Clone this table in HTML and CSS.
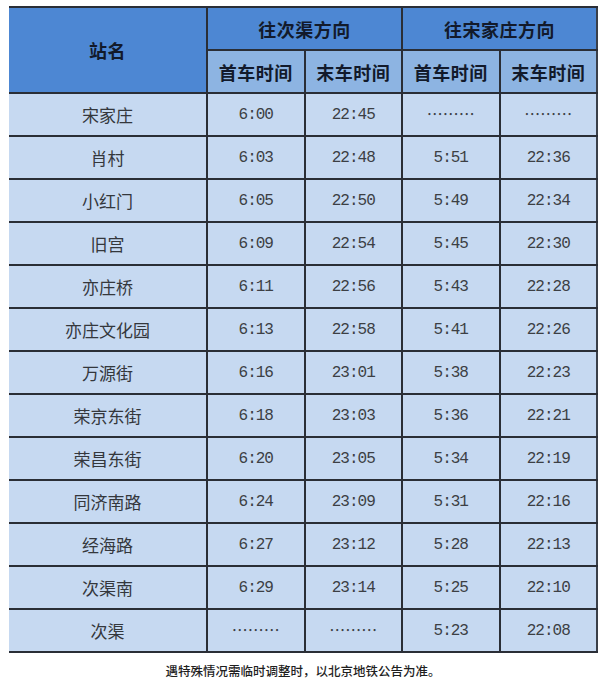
FILE: index.html
```html
<!DOCTYPE html>
<html lang="zh-CN">
<head>
<meta charset="utf-8">
<title>亦庄线首末车时间</title>
<link rel="stylesheet" href="styles.css">
</head>
<body>
<div class="page">
  <table class="timetable">
    <colgroup>
      <col class="c-name">
      <col class="c-time">
      <col class="c-time">
      <col class="c-time">
      <col class="c-time">
    </colgroup>
    <thead>
      <tr class="h1">
        <th rowspan="2" class="hname">站名</th>
        <th colspan="2">往次渠方向</th>
        <th colspan="2" class="last">往宋家庄方向</th>
      </tr>
      <tr class="h2">
        <th>首车时间</th>
        <th>末车时间</th>
        <th>首车时间</th>
        <th class="last">末车时间</th>
      </tr>
    </thead>
    <tbody>
      <tr><td class="name">宋家庄</td><td>6:00</td><td>22:45</td><td class="dots">………</td><td class="dots last">………</td></tr>
      <tr><td class="name">肖村</td><td>6:03</td><td>22:48</td><td>5:51</td><td class="last">22:36</td></tr>
      <tr><td class="name">小红门</td><td>6:05</td><td>22:50</td><td>5:49</td><td class="last">22:34</td></tr>
      <tr><td class="name">旧宫</td><td>6:09</td><td>22:54</td><td>5:45</td><td class="last">22:30</td></tr>
      <tr><td class="name">亦庄桥</td><td>6:11</td><td>22:56</td><td>5:43</td><td class="last">22:28</td></tr>
      <tr><td class="name">亦庄文化园</td><td>6:13</td><td>22:58</td><td>5:41</td><td class="last">22:26</td></tr>
      <tr><td class="name">万源街</td><td>6:16</td><td>23:01</td><td>5:38</td><td class="last">22:23</td></tr>
      <tr><td class="name">荣京东街</td><td>6:18</td><td>23:03</td><td>5:36</td><td class="last">22:21</td></tr>
      <tr><td class="name">荣昌东街</td><td>6:20</td><td>23:05</td><td>5:34</td><td class="last">22:19</td></tr>
      <tr><td class="name">同济南路</td><td>6:24</td><td>23:09</td><td>5:31</td><td class="last">22:16</td></tr>
      <tr><td class="name">经海路</td><td>6:27</td><td>23:12</td><td>5:28</td><td class="last">22:13</td></tr>
      <tr><td class="name">次渠南</td><td>6:29</td><td>23:14</td><td>5:25</td><td class="last">22:10</td></tr>
      <tr class="lastrow"><td class="name">次渠</td><td class="dots">………</td><td class="dots">………</td><td>5:23</td><td class="last">22:08</td></tr>
    </tbody>
  </table>
  <p class="note">遇特殊情况需临时调整时，以北京地铁公告为准。</p>
</div>
</body>
</html>
```

FILE: styles.css
```css
html, body {
  margin: 0;
  padding: 0;
  background: #ffffff;
}

.page {
  width: 600px;
  height: 681px;
  padding: 6px 0 0 9px;
  box-sizing: border-box;
}

.timetable {
  border-collapse: collapse;
  table-layout: fixed;
  width: 588px;
  border-top: 2px solid #23272f;
  border-right: 2px solid #3a3f48;
  border-bottom: 2px solid #23272f;
}

.c-name { width: 198px; }
.c-time { width: 97.5px; }

.timetable th,
.timetable td {
  height: 41px;
  padding: 0;
  text-align: center;
  vertical-align: middle;
  border: 2px solid #2a2e36;
  border-left: 0;
}

.timetable th.last,
.timetable td.last { border-right: 0; }

.timetable td:first-child,
.timetable th:first-child { border-left: 0; }

.timetable tbody tr:first-child td { border-top: 2px solid #2a2e36; }

.timetable th {
  font-family: "Noto Sans CJK SC", "Noto Sans", sans-serif;
  font-size: 18px;
  font-weight: 700;
  color: #121a2b;
  letter-spacing: 0.5px;
}

.h1 th { background: #4d87d3; }
.h1 th.hname { background: #4d87d3; }
.h2 th { background: #8db4e2; }

.timetable td {
  background: #c6d9f1;
  font-family: "Liberation Mono", monospace;
  font-size: 16px;
  letter-spacing: -1px;
  color: #3c3f44;
}

.timetable td.name {
  font-family: "Noto Sans CJK SC", "Noto Sans", sans-serif;
  font-size: 17px;
  letter-spacing: 0;
  color: #34373c;
}

.timetable td.dots {
  font-family: "Noto Sans CJK SC", sans-serif;
  font-size: 16px;
  letter-spacing: 0;
  color: #3c3f44;
  padding-bottom: 4px;
  height: 37px;
}

.note {
  margin: 10px 0 0 0;
  width: 588px;
  text-align: center;
  font-family: "Noto Sans CJK SC", sans-serif;
  font-size: 12.5px;
  font-weight: 500;
  color: #1f1f1f;
  line-height: 16px;
}
```
